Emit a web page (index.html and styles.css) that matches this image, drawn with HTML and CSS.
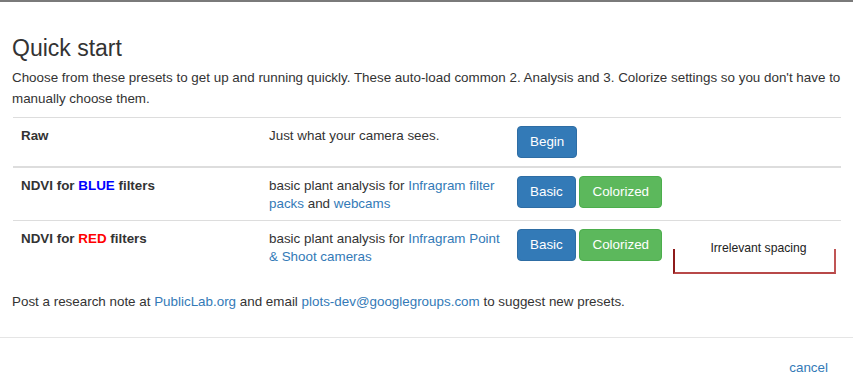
FILE: index.html
```html
<!DOCTYPE html>
<html lang="en">
<head>
    <meta charset="UTF-8">
    <meta name="viewport" content="width=device-width, initial-scale=1.0">
    <title>Quick start</title>
    <link rel="stylesheet" href="styles.css">
</head>
<body>
    <div class="modal">
        <div class="modal-body">
            <h3>Quick start</h3>
            <p class="intro">Choose from these presets to get up and running quickly. These auto-load common 2. Analysis and 3. Colorize settings so you don't have to manually choose them.</p>

            <div class="preset-wrap">
                <table class="presets">
                    <thead>
                        <tr>
                            <th class="col-name">Raw</th>
                            <td class="col-desc">Just what your camera sees.</td>
                            <td><a href="#" class="btn btn-primary">Begin</a></td>
                        </tr>
                    </thead>
                    <tbody>
                        <tr>
                            <th class="col-name">NDVI for <span class="blue">BLUE</span> filters</th>
                            <td class="col-desc">basic plant analysis for <a href="#">Infragram filter packs</a> and <a href="#">webcams</a></td>
                            <td><a href="#" class="btn btn-primary">Basic</a> <a href="#" class="btn btn-success">Colorized</a></td>
                        </tr>
                        <tr>
                            <th class="col-name">NDVI for <span class="red">RED</span> filters</th>
                            <td class="col-desc">basic plant analysis for <a href="#">Infragram Point &amp; Shoot cameras</a></td>
                            <td><a href="#" class="btn btn-primary">Basic</a> <a href="#" class="btn btn-success">Colorized</a></td>
                        </tr>
                    </tbody>
                </table>
                <div class="spacing-note">Irrelevant spacing</div>
            </div>

            <p class="suggest">Post a research note at <a href="#">PublicLab.org</a> and email <a href="#">plots-dev@googlegroups.com</a> to suggest new presets.</p>
        </div>
        <div class="modal-footer">
            <a href="#" class="cancel">cancel</a>
        </div>
    </div>
</body>
</html>
```

FILE: styles.css
```css
body {
    margin: 0;
    font-family: "Liberation Sans", Arial, sans-serif;
    font-size: 13.4px;
    line-height: 18px;
    color: #333;
    background-color: #fff;
}

a {
    color: #337ab7;
    text-decoration: none;
}

.modal {
    border-top: 2px solid #7a7a7a;
}

.modal-body {
    padding: 33px 12px 0 13px;
}

h3 {
    margin: 0 0 0 -1px;
    font-size: 23px;
    font-weight: normal;
    line-height: 26px;
}

.intro {
    margin: 6px 0 8px -1px;
    line-height: 21px;
}

.preset-wrap {
    position: relative;
}

.presets {
    width: 100%;
    border-collapse: collapse;
    margin-bottom: 18px;
}

.presets th,
.presets td {
    padding: 8px;
    text-align: left;
    vertical-align: top;
    border-top: 1px solid #ddd;
}

.presets thead th,
.presets thead td {
    border-bottom: 2px solid #ddd;
}

.presets tbody tr:first-child th,
.presets tbody tr:first-child td {
    border-top: none;
}

.presets .col-name {
    width: 232px;
    font-weight: bold;
    padding: 9px 8px 7px 8px;
}

.presets .col-desc {
    width: 232px;
    padding: 9px 8px 7px 8px;
}

.blue {
    color: #0000ff;
}

.red {
    color: #ff0000;
}

.btn {
    display: inline-block;
    padding: 6px 12px;
    font-size: 13.4px;
    line-height: 18px;
    border: 1px solid transparent;
    border-radius: 4px;
    color: #fff;
}

.btn-primary {
    background-color: #337ab7;
    border-color: #2e6da4;
}

.btn-success {
    background-color: #5cb85c;
    border-color: #4cae4c;
}

.spacing-note {
    position: absolute;
    left: 660px;
    top: 123px;
    width: 155px;
    height: 34px;
    padding-left: 8px;
    text-align: center;
    font-size: 12.2px;
    line-height: 16px;
    color: #222;
}

.spacing-note::after {
    content: "";
    position: absolute;
    left: 0;
    right: 0;
    top: 9px;
    bottom: 0;
    border-left: 2px solid #8e1b1b;
    border-right: 2px solid #c05555;
    border-bottom: 2px solid #b84848;
}

.suggest {
    margin: 0 0 0 -1px;
    line-height: 20px;
    padding-top: 1px;
}

.modal-footer {
    margin-top: 25px;
    border-top: 1px solid #e5e5e5;
    padding: 21px 25px 0 0;
    text-align: right;
}

.cancel {
    font-size: 13.4px;
}
```
